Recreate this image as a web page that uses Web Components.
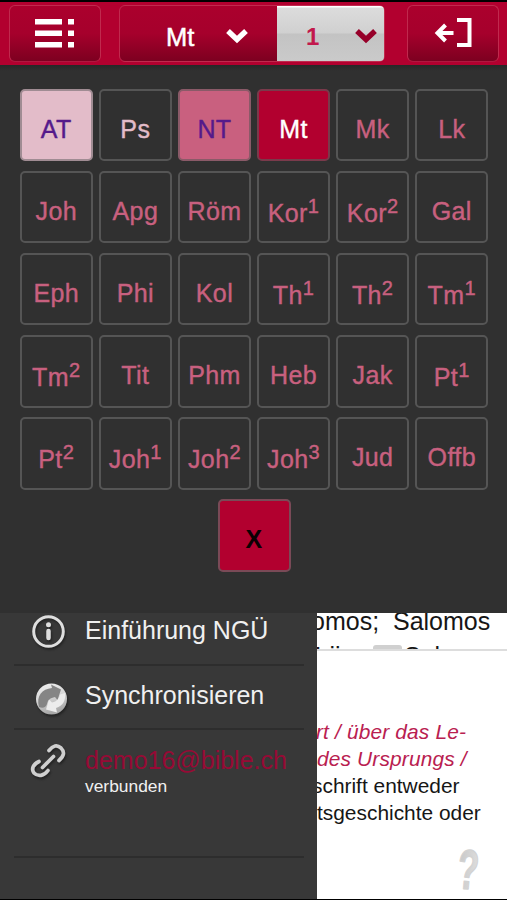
<!DOCTYPE html>
<html lang="de">
<head>
<meta charset="utf-8">
<title>Bibel</title>
<style>
    body{
        margin: 0;
        width: 507px;
        height: 900px;
        overflow: hidden;
        background: #000;
        font-family: "Liberation Sans", Arial, sans-serif;
    }
</style>
</head>
<body>
<bible-app></bible-app>
<script>
class ToolButton extends HTMLElement{
    constructor(){
        super()
        this.attachShadow({mode: 'open'}).innerHTML = `
            <style>
                :host{
                    display: flex;
                    align-items: center;
                    justify-content: center;
                    box-sizing: border-box;
                    width: 92px;
                    height: 57px;
                    border: 1px solid #c02a4e;
                    border-bottom-color: #b01840;
                    border-radius: 6px;
                    background: linear-gradient(#ab002d, #a6002c 50%, #7d0020);
                }
            </style>
            <slot></slot>
        `
    }
}
customElements.define('tool-button', ToolButton)

class ToolSelect extends HTMLElement{
    constructor(){
        super()
        this.attachShadow({mode: 'open'}).innerHTML = `
            <style>
                :host{
                    display: flex;
                    align-items: center;
                    box-sizing: border-box;
                    height: 55px;
                    color: #fff;
                    font-size: 25.500px;
                    padding-top: 7px;
                    -webkit-text-stroke: .5px;
                }
                :host([active]){
                    color: #c2184c;
                    background: linear-gradient(#fff 0 1px, #dcdcdc 2px, #d0d0d0 49%, #c3c3c3 51%, #cacaca);
                    border-radius: 0 4px 4px 0;
                    font-weight: bold;
                    font-size: 24px;
                    -webkit-text-stroke: 0;
                }
                slot{
                    display: block;
                    flex: 1;
                }
                svg{
                    margin-bottom: 2px;
                }
            </style>
            <slot></slot>
            <svg width="26" height="20"><path d="M4 5l9 8.500L22 5" fill="none" stroke="${this.hasAttribute('active') ? '#960029' : '#fff'}" stroke-width="5.400"/></svg>
        `
    }
}
customElements.define('tool-select', ToolSelect)

class TopBar extends HTMLElement{
    constructor(){
        super()
        this.attachShadow({mode: 'open'}).innerHTML = `
            <style>
                :host{
                    display: flex;
                    box-sizing: border-box;
                    height: 65px;
                    padding: 3px 8px 0 9px;
                    background: #b2002f;
                    border-top: 2px solid #000;
                }
                .group{
                    display: flex;
                    box-sizing: border-box;
                    width: 266px;
                    height: 57px;
                    margin: 0 22px 0 18px;
                    border: 1px solid #c02a4e;
                    border-radius: 6px;
                    background: linear-gradient(#ab002d, #a6002c 50%, #7d0020);
                }
                .book{
                    width: 157px;
                    padding-left: 46px;
                    padding-right: 27px;
                }
                .chapter{
                    width: 107px;
                    padding-left: 29px;
                    padding-right: 5px;
                }
            </style>
            <tool-button>
                <svg width="40" height="30" fill="#fff">
                    <path d="M0 0h27v5.500H0zM33 0h6v5.500h-6zM0 11.500h27v5.500H0zM33 11.500h6v5.500h-6zM0 23h27v5.500H0zM33 23h6v5.500h-6z"/>
                </svg>
            </tool-button>
            <div class="group">
                <tool-select class="book">Mt</tool-select>
                <tool-select class="chapter" active>1</tool-select>
            </div>
            <tool-button>
                <svg width="40" height="32" fill="none" stroke="#fff" stroke-width="4">
                    <path d="M24 2h12.500v25H24M20.500 15H5M12.500 7l-8 8 8 8"/>
                </svg>
            </tool-button>
        `
    }
}
customElements.define('top-bar', TopBar)

class BookTile extends HTMLElement{
    constructor(){
        super()
        this.attachShadow({mode: 'open'}).innerHTML = `
            <style>
                :host{
                    display: block;
                    box-sizing: border-box;
                    height: 72.500px;
                    border: 2px solid #555;
                    border-radius: 5px;
                    color: #c8607f;
                    font-size: 25px;
                    line-height: 77px;
                    text-align: center;
                    white-space: nowrap;
                    letter-spacing: .4px;
                    -webkit-text-stroke: .4px;
                }
                :host([kind=at]){
                    background: #e3bcc9;
                    border-color: #a08c93;
                    color: #551a8b;
                }
                :host([kind=ps]){
                    color: #e3bcc9;
                }
                :host([kind=nt]){
                    background: #c9607f;
                    border-color: #8a5a68;
                    color: #551a8b;
                }
                :host([kind=current]){
                    background: #b2002f;
                    border-color: #7a3a4b;
                    color: #fff;
                }
                :host([kind=close]){
                    width: 73px;
                    background: #b2002f;
                    border-color: #7a4a57;
                    color: #0c0003;
                    font-weight: bold;
                    -webkit-text-stroke: 0;
                }
                :host([num]){
                    line-height: 81px;
                }
                sup{
                    font-size: 20px;
                    line-height: 0;
                    vertical-align: 9.500px;
                }
            </style>
            <slot></slot>${this.hasAttribute('num') ? `<sup>${this.getAttribute('num')}</sup>` : ''}
        `
    }
}
customElements.define('book-tile', BookTile)

const books = [
    ['AT', 'at'], ['Ps', 'ps'], ['NT', 'nt'], ['Mt', 'current'], ['Mk'], ['Lk'],
    ['Joh'], ['Apg'], ['Röm'], ['Kor', '', 1], ['Kor', '', 2], ['Gal'],
    ['Eph'], ['Phi'], ['Kol'], ['Th', '', 1], ['Th', '', 2], ['Tm', '', 1],
    ['Tm', '', 2], ['Tit'], ['Phm'], ['Heb'], ['Jak'], ['Pt', '', 1],
    ['Pt', '', 2], ['Joh', '', 1], ['Joh', '', 2], ['Joh', '', 3], ['Jud'], ['Offb']
]

class BookPicker extends HTMLElement{
    constructor(){
        super()
        const tiles = books.map(([name, kind, num]) =>
            `<book-tile${kind ? ` kind="${kind}"` : ''}${num ? ` num="${num}"` : ''}>${name}</book-tile>`
        ).join('')
        this.attachShadow({mode: 'open'}).innerHTML = `
            <style>
                :host{
                    display: block;
                    box-sizing: border-box;
                    height: 548px;
                    padding: 23.500px 19px 0 20px;
                    background: linear-gradient(#272727, #303030 6px);
                }
                .grid{
                    display: grid;
                    grid-template-columns: repeat(6, 1fr);
                    gap: 9.700px 6.600px;
                }
                .close{
                    display: flex;
                    justify-content: center;
                    margin-top: 9.700px;
                }
            </style>
            <div class="grid">${tiles}</div>
            <div class="close"><book-tile kind="close">X</book-tile></div>
        `
    }
}
customElements.define('book-picker', BookPicker)

class MenuItem extends HTMLElement{
    constructor(){
        super()
        this.attachShadow({mode: 'open'}).innerHTML = `
            <style>
                :host{
                    display: flex;
                    box-sizing: border-box;
                    margin: 0 13px 0 14px;
                    border-bottom: 2px solid #2d2d2d;
                    color: #f0f0f0;
                    font-size: 25px;
                    line-height: 30px;
                    white-space: nowrap;
                }
                .icon{
                    width: 71px;
                    flex: none;
                }
                ::slotted(svg){
                    display: block;
                    filter: drop-shadow(1px 2px 1px #222);
                }
            </style>
            <div class="icon"><slot name="icon"></slot></div>
            <div><slot></slot></div>
        `
    }
}
customElements.define('menu-item', MenuItem)

class SideMenu extends HTMLElement{
    constructor(){
        super()
        this.attachShadow({mode: 'open'}).innerHTML = `
            <style>
                :host{
                    display: block;
                    width: 317px;
                    flex: none;
                    background: #383838;
                }
                .info{
                    height: 53px;
                    padding-top: 2px;
                }
                .sync{
                    height: 64px;
                    padding-top: 14px;
                }
                .user{
                    height: 128px;
                    padding-top: 14px;
                }
                .mail{
                    color: #960a35;
                    margin-top: 1px;
                }
                .state{
                    font-size: 17.400px;
                    line-height: 22px;
                }
            </style>
            <menu-item class="info">
                <svg slot="icon" width="60" height="40">
                    <circle cx="34.500" cy="16.500" r="14.800" fill="none" stroke="#dedede" stroke-width="3"/>
                    <circle cx="34.500" cy="9.800" r="2.500" fill="#dedede"/>
                    <path d="M34.500 16v7" stroke="#dedede" stroke-width="4.500" stroke-linecap="round"/>
                </svg>
                <span>Einführung NGÜ</span>
            </menu-item>
            <menu-item class="sync">
                <svg slot="icon" width="60" height="40">
                    <defs>
                        <linearGradient id="ball" x1="0" y1="0" x2=".3" y2="1">
                            <stop offset="0" stop-color="#f2f2f2"/>
                            <stop offset=".5" stop-color="#d8d8d8"/>
                            <stop offset="1" stop-color="#a8a8a8"/>
                        </linearGradient>
                    </defs>
                    <circle cx="37.500" cy="19" r="15.500" fill="url(#ball)"/>
                    <path d="M25 27c-3-11 3-18 13-19l-1-3.500L47 9.500l-3.500 10.500-2.500-3c-5 1-7 3-8 7-1 3-4 5-8 3z" fill="#858585"/>
                    <path d="M51 13c1 7-2 13-9 15l1 4.500-11-3 3-10 3 3c5-1 7-4 8-8z" fill="#ececec"/>
                </svg>
                <span>Synchronisieren</span>
            </menu-item>
            <menu-item class="user">
                <svg slot="icon" width="60" height="44" fill="none" stroke="#cfcfcf" stroke-width="3.700" stroke-linecap="round">
                    <path d="M28.500 23.500L39.500 12.500"/>
                    <path d="M35 6.500c4-5 8-6 12-2.500 4 4 3 8-2 12.500"/>
                    <path d="M25 17.500c-6 3-8 7-5 11.500 4 4 10 3 14-2.500"/>
                </svg>
                <div class="mail">demo16@bible.ch</div>
                <div class="state">verbunden</div>
            </menu-item>
        `
    }
}
customElements.define('side-menu', SideMenu)

class BibleText extends HTMLElement{
    constructor(){
        super()
        this.attachShadow({mode: 'open'}).innerHTML = `
            <style>
                :host{
                    display: flex;
                    flex-direction: column;
                    flex: 1;
                    min-width: 0;
                    overflow: hidden;
                    background: #fff;
                    color: #161616;
                }
                .verse{
                    flex: none;
                    height: 36px;
                    overflow: hidden;
                    font-size: 25px;
                    line-height: 33px;
                    white-space: pre;
                }
                .verse div{
                    margin: -8px 0 0 -6px;
                    height: 33px;
                }
                .verse div + div{
                    margin: 2px 0 0 -14px;
                }
                .mark{
                    display: inline-block;
                    width: 29px;
                    height: 20px;
                    margin: 0 2px 0 6px;
                    border-radius: 3px;
                    background: #d0d0d0;
                    vertical-align: 0;
                }
                .note{
                    flex: 1;
                    padding-top: 67px;
                    border-top: 2px solid #ddd;
                    font-size: 20.900px;
                    line-height: 27px;
                    white-space: nowrap;
                }
                em{
                    color: #b92050;
                    letter-spacing: .15px;
                }
                .help{
                    display: block;
                    margin: 19px 0 0 135px;
                }
            </style>
            <div class="verse"><div>omos;  Salomos</div><div>Urijas<span class="mark"></span>Salomo</div></div>
            <div class="note">
                <div><em style="margin-left:-1px">rt / über das Le-</em></div>
                <div><em>des Ursprungs /</em></div>
                <div style="margin-left:-5px">schrift entweder</div>
                <div>tsgeschichte oder</div>
                <svg class="help" width="36" height="48">
                    <defs>
                        <linearGradient id="shade" x1="0" x2="1">
                            <stop offset="0" stop-color="#c8c8c8"/>
                            <stop offset="1" stop-color="#dedede"/>
                        </linearGradient>
                    </defs>
                    <text transform="translate(4 43) rotate(5) scale(.62 1)" font-size="56" font-weight="bold" fill="url(#shade)" stroke="#d2d2d2" stroke-width="1.500" stroke-linejoin="round">?</text>
                </svg>
            </div>
        `
    }
}
customElements.define('bible-text', BibleText)

class BibleApp extends HTMLElement{
    constructor(){
        super()
        this.attachShadow({mode: 'open'}).innerHTML = `
            <style>
                :host{
                    display: flex;
                    flex-direction: column;
                    width: 507px;
                    height: 899px;
                    overflow: hidden;
                }
                main{
                    display: flex;
                    height: 286px;
                }
            </style>
            <top-bar></top-bar>
            <book-picker></book-picker>
            <main>
                <side-menu></side-menu>
                <bible-text></bible-text>
            </main>
        `
    }
}
customElements.define('bible-app', BibleApp)
</script>
</body>
</html>
